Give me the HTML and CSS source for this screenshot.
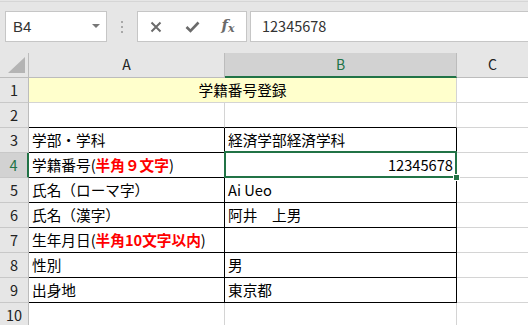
FILE: index.html
```html
<!DOCTYPE html>
<html lang="ja">
<head>
    <meta charset="UTF-8">
    <title>学籍番号登録</title>
    <link rel="stylesheet" href="styles.css">
</head>
<body>

    <!-- 数式バー -->
    <div class="toolbar">
        <div class="namebox">
            <span>B4</span>
            <span class="arrow"></span>
        </div>
        <div class="grip"><i></i><i></i><i></i></div>
        <div class="buttons">
            <span class="btn">
                <svg width="12" height="12" viewBox="0 0 12 12"><path d="M1.5 1.5 L10.5 10.5 M10.5 1.5 L1.5 10.5" stroke="#6b6b6b" stroke-width="2" fill="none"/></svg>
            </span>
            <span class="btn">
                <svg width="15" height="12" viewBox="0 0 15 12"><path d="M1.5 6 L5.5 10 L13.5 1.5" stroke="#6b6b6b" stroke-width="2.6" fill="none"/></svg>
            </span>
            <span class="btn"><span class="fx">f<sub>x</sub></span></span>
        </div>
        <div class="formula">12345678</div>
    </div>

    <!-- シート -->
    <div class="sheet">
        <div class="corner">
            <svg width="29" height="25" viewBox="0 0 29 25"><polygon points="8,20 25,20 25,4" fill="#b4b4b4"/></svg>
        </div>
        <div class="ch">A</div>
        <div class="ch sel">B</div>
        <div class="ch">C</div>

        <div class="rh">1</div>
        <div class="c title">学籍番号登録</div>
        <div class="c"></div>

        <div class="rh">2</div>
        <div class="c tb"></div>
        <div class="c tb"></div>
        <div class="c"></div>

        <div class="rh">3</div>
        <div class="c t">学部・学科</div>
        <div class="c t">経済学部経済学科</div>
        <div class="c"></div>

        <div class="rh sel">4</div>
        <div class="c t">学籍番号(<b>半角９文字</b>)</div>
        <div class="c t num">12345678</div>
        <div class="c"></div>

        <div class="rh">5</div>
        <div class="c t">氏名（ローマ字）</div>
        <div class="c t">Ai Ueo</div>
        <div class="c"></div>

        <div class="rh">6</div>
        <div class="c t">氏名（漢字）</div>
        <div class="c t">阿井　上男</div>
        <div class="c"></div>

        <div class="rh">7</div>
        <div class="c t">生年月日(<b>半角10文字以内</b>)</div>
        <div class="c t"></div>
        <div class="c"></div>

        <div class="rh">8</div>
        <div class="c t">性別</div>
        <div class="c t">男</div>
        <div class="c"></div>

        <div class="rh">9</div>
        <div class="c t">出身地</div>
        <div class="c t">東京都</div>
        <div class="c"></div>

        <div class="rh">10</div>
        <div class="c"></div>
        <div class="c"></div>
        <div class="c"></div>

        <!-- 選択セル B4 -->
        <div class="selection"><span class="handle"></span></div>
    </div>

</body>
</html>
```

FILE: styles.css
```css
* {
    margin: 0;
    padding: 0;
    box-sizing: border-box;
}

body {
    font-family: "Noto Sans CJK JP", "Noto Sans", sans-serif;
    background-color: #e6e6e6;
    width: 528px;
    height: 325px;
    overflow: hidden;
    color: #000;
}

/* 数式バー */
.toolbar {
    height: 52px;
    display: flex;
    align-items: flex-start;
    padding-top: 9px;
    border-top: 1px solid #d6d6d6;
    margin-top: 1px;
}

.namebox {
    margin-left: 5px;
    width: 102px;
    height: 31px;
    background-color: #fff;
    border: 1px solid #c6c6c6;
    display: flex;
    align-items: center;
    justify-content: space-between;
    padding: 0 6px 0 7px;
    font-family: "Liberation Sans", Arial, sans-serif;
    font-size: 15px;
    color: #333;
}

.arrow {
    width: 0;
    height: 0;
    border-left: 4px solid transparent;
    border-right: 4px solid transparent;
    border-top: 4px solid #777;
    margin-top: -2px;
}

.grip {
    width: 30px;
    height: 31px;
    display: flex;
    flex-direction: column;
    align-items: center;
    justify-content: center;
    gap: 3px;
}

.grip i {
    display: block;
    width: 2px;
    height: 2px;
    background-color: #a8a8a8;
}

.buttons {
    width: 110px;
    height: 31px;
    background-color: #fff;
    border: 1px solid #c6c6c6;
    display: flex;
    align-items: center;
}

.btn {
    width: 36px;
    display: flex;
    justify-content: center;
    align-items: center;
}

.fx {
    font-family: "DejaVu Serif", "Liberation Serif", serif;
    font-style: italic;
    font-weight: bold;
    font-size: 15px;
    line-height: 18px;
    color: #6b6b6b;
    margin-top: -3px;
}

.fx sub {
    font-size: 11px;
    vertical-align: -2px;
    line-height: 0;
}

.formula {
    flex: 1;
    margin-left: 3px;
    height: 31px;
    background-color: #fff;
    border: 1px solid #c6c6c6;
    border-right: none;
    padding-left: 11px;
    font-size: 14.5px;
    line-height: 28px;
    color: #333;
}

/* シート */
.sheet {
    position: relative;
    display: grid;
    grid-template-columns: 29px 196px 232px 72px;
    grid-auto-rows: 25px;
}

.corner {
    background-color: #e6e6e6;
    border-right: 1px solid #bcbcbc;
    border-bottom: 1px solid #bcbcbc;
}

.ch {
    background-color: #e6e6e6;
    border-right: 1px solid #bcbcbc;
    border-bottom: 1px solid #bcbcbc;
    text-align: center;
    font-size: 14px;
    line-height: 23px;
    color: #222;
}

.rh {
    background-color: #e6e6e6;
    border-right: 1px solid #bcbcbc;
    border-bottom: 1px solid #c8c8c8;
    text-align: center;
    font-size: 14.5px;
    line-height: 24px;
    color: #222;
}

.ch.sel {
    background-color: #d2d2d2;
    color: #217346;
    border-bottom: 2px solid #217346;
}

.rh.sel {
    background-color: #d2d2d2;
    color: #217346;
    border-right: 2px solid #217346;
}

.c {
    background-color: #fff;
    border-right: 1px solid #d4d4d4;
    border-bottom: 1px solid #d4d4d4;
    padding: 0 3px;
    font-size: 14.67px;
    line-height: 24px;
    white-space: nowrap;
}

.c.title {
    grid-column: span 2;
    background-color: #ffffcc;
    text-align: center;
}

.c.t {
    border-right: 1px solid #000;
    border-bottom: 1px solid #000;
}

.c.tb {
    border-bottom: 1px solid #000;
}

.c.num {
    text-align: right;
}

.c b {
    color: #ff0000;
    font-weight: bold;
}

/* 選択枠 */
.selection {
    position: absolute;
    left: 224px;
    top: 98px;
    width: 233px;
    height: 27px;
    border: 2px solid #217346;
}

.handle {
    position: absolute;
    right: -5px;
    bottom: -5px;
    width: 7px;
    height: 7px;
    background-color: #217346;
    border: 1px solid #fff;
}
```
